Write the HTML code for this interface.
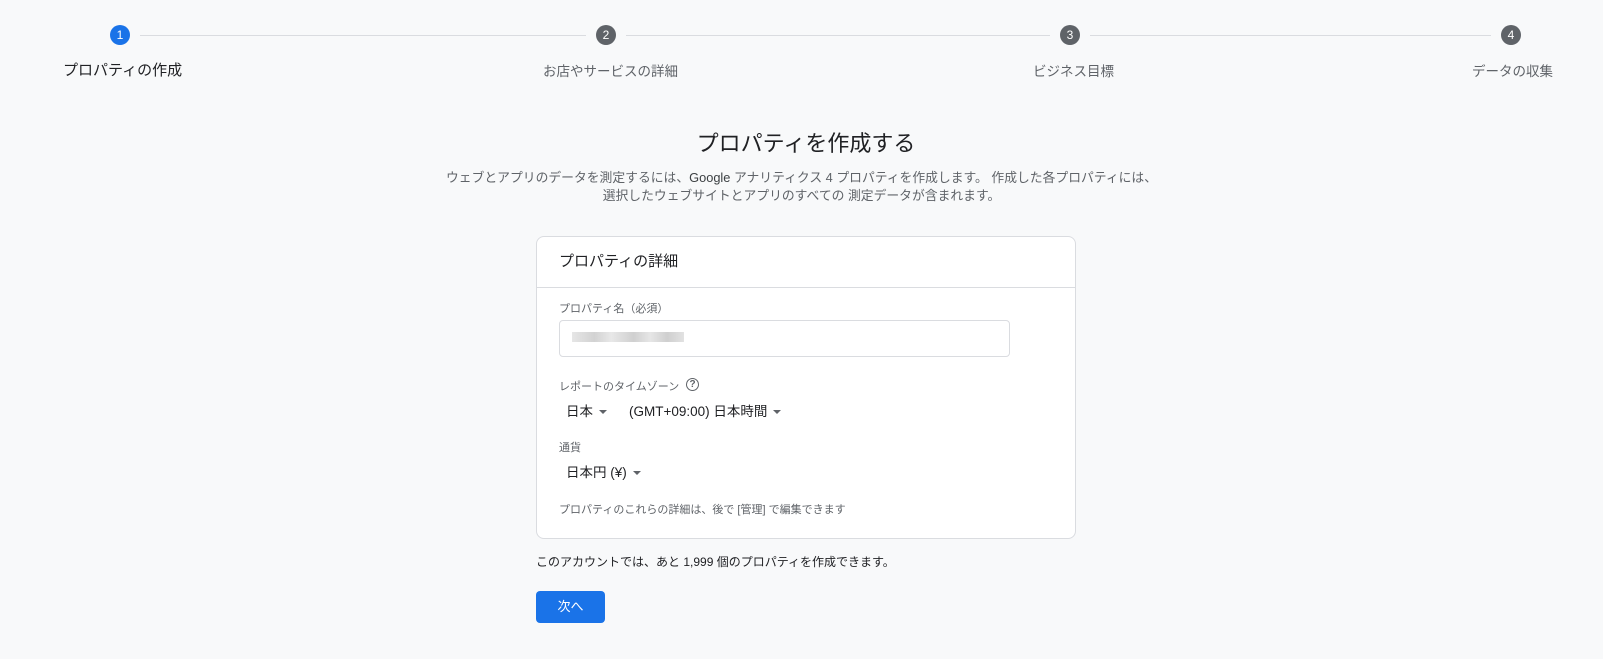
<!DOCTYPE html>
<html><head><meta charset="utf-8"><style>
body{margin:0;width:1603px;height:659px;background:#f8f9fa;font-family:"Liberation Sans","Noto Sans CJK JP",sans-serif;color:#202124;position:relative;overflow:hidden}
.a{position:absolute;white-space:nowrap}
.c{position:absolute;width:20px;height:20px;border-radius:50%;background:#5f6368;color:#fff;font-size:12px;line-height:20px;text-align:center;top:25px}
.line{position:absolute;top:35px;height:1px;background:#dadce0}
.lbl{font-size:13.5px;color:#5f6368}
.tri{display:inline-block;width:0;height:0;border-left:4px solid transparent;border-right:4px solid transparent;border-top:4px solid #5f6368;vertical-align:middle;margin-left:6px}
</style></head><body>
<div class="line" style="left:140px;width:446px"></div>
<div class="line" style="left:626px;width:424px"></div>
<div class="line" style="left:1090px;width:401px"></div>
<div class="c" style="left:110px;background:#1a73e8">1</div>
<div class="c" style="left:596px">2</div>
<div class="c" style="left:1060px">3</div>
<div class="c" style="left:1501px">4</div>
<div class="a" style="left:63px;top:59px;font-size:15px;color:#202124">プロパティの作成</div>
<div class="a lbl" style="left:543px;top:60px">お店やサービスの詳細</div>
<div class="a lbl" style="left:1033px;top:60px">ビジネス目標</div>
<div class="a lbl" style="left:1472px;top:60px">データの収集</div>

<div class="a" style="left:0;width:1612px;text-align:center;top:126px;font-size:22px;color:#202124">プロパティを作成する</div>
<div class="a" style="left:0;width:1603px;text-align:center;top:169px;font-size:12.8px;line-height:18px;color:#5f6368">ウェブとアプリのデータを測定するには、<span style="color:#3c4043">Google</span> アナリティクス 4 プロパティを作成します。 作成した各プロパティには、<br>選択したウェブサイトとアプリのすべての 測定データが含まれます。</div>

<div class="a" style="left:536px;top:236px;width:538px;height:301px;background:#fff;border:1px solid #dadce0;border-radius:8px"></div>
<div class="a" style="left:537px;top:287px;width:538px;height:1px;background:#dadce0"></div>
<div class="a" style="left:559px;top:250px;font-size:15px;color:#202124">プロパティの詳細</div>
<div class="a" style="left:559px;top:300px;font-size:11px;color:#5f6368">プロパティ名（必須）</div>
<div class="a" style="left:559px;top:320px;width:449px;height:35px;border:1px solid #dadce0;border-radius:4px;background:#fff"></div>
<div class="a" style="left:572px;top:332px;width:112px;height:10px;background:linear-gradient(90deg,#e6e6e6,#d2d2d2 20%,#e8e8e8 35%,#d0d0d0 55%,#e6e6e6 70%,#cfcfcf 85%,#e2e2e2)"></div>
<div class="a" style="left:559px;top:378px;font-size:11px;color:#5f6368">レポートのタイムゾーン</div>
<div class="a" style="left:686px;top:378px;width:11px;height:11px;border:1.5px solid #5f6368;border-radius:50%;font-size:10px;line-height:11px;text-align:center;color:#5f6368;font-weight:bold">?</div>
<div class="a" style="left:566px;top:400px;font-size:13.5px">日本<span class="tri"></span></div>
<div class="a" style="left:629px;top:400px;font-size:13.5px">(GMT+09:00) 日本時間<span class="tri"></span></div>
<div class="a" style="left:559px;top:439px;font-size:11px;color:#5f6368">通貨</div>
<div class="a" style="left:566px;top:461px;font-size:13.5px">日本円 (¥)<span class="tri"></span></div>
<div class="a" style="left:559px;top:501px;font-size:11px;color:#5f6368">プロパティのこれらの詳細は、後で [管理] で編集できます</div>

<div class="a" style="left:536px;top:553px;font-size:12px;color:#202124">このアカウントでは、あと 1,999 個のプロパティを作成できます。</div>
<div class="a" style="left:536px;top:591px;width:69px;height:32px;background:#1a73e8;border-radius:4px;color:#fff;font-size:13px;line-height:32px;text-align:center">次へ</div>
</body></html>
